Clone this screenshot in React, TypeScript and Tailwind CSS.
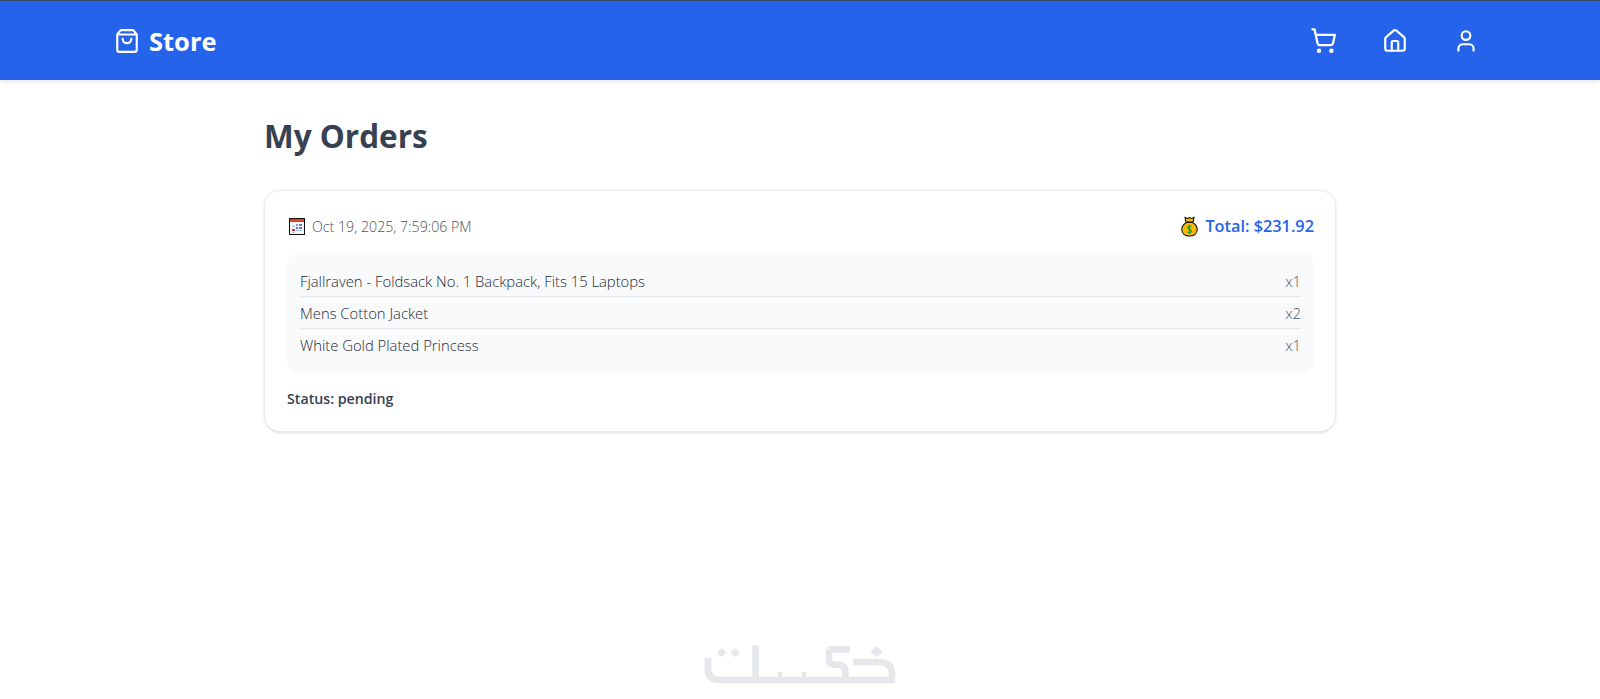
import { ShoppingBag, ShoppingCart, Home, User } from 'lucide-react'

const items = [
  { name: 'Fjallraven - Foldsack No. 1 Backpack, Fits 15 Laptops', qty: 1 },
  { name: 'Mens Cotton Jacket', qty: 2 },
  { name: 'White Gold Plated Princess', qty: 1 },
]

function CalendarEmoji() {
  return (
    <svg width="16" height="17" viewBox="0 0 16 17" shapeRendering="crispEdges" className="ml-[2px] shrink-0">
      <rect width="16" height="17" fill="#111" />
      <rect x="1" y="1" width="14" height="3" fill="#e8401c" />
      <rect x="1" y="4" width="14" height="12" fill="#f7f7f7" />
      <rect x="7" y="6" width="2" height="2" fill="#7f9bd0" />
      <rect x="10" y="6" width="3" height="2" fill="#5a7fc0" />
      <rect x="3" y="8" width="3" height="1" fill="#a9bde0" />
      <rect x="7" y="9" width="2" height="2" fill="#5a7fc0" />
      <rect x="10" y="9" width="3" height="2" fill="#5a7fc0" />
      <rect x="3" y="11" width="3" height="2" fill="#d8342a" />
      <rect x="7" y="12" width="6" height="1" fill="#a9bde0" />
      <rect x="3" y="14" width="2" height="1" fill="#a9bde0" />
    </svg>
  )
}

function MoneyBagEmoji() {
  return (
    <svg width="17" height="21" viewBox="0 0 17 21" className="shrink-0">
      <path d="M4 1.500 6.500 2.500 8.500 1.500 10.500 2.500 13 1.500 12 6H5Z" fill="#ffb900" stroke="#111" strokeWidth="1.100" />
      <path d="M5.500 6.500C2 8.500.8 11 .8 13.500.8 17.500 4 20 8.500 20S16.200 17.500 16.200 13.500C16.200 11 15 8.500 11.500 6.500Z" fill="#ffb900" stroke="#111" strokeWidth="1.100" />
      <path d="M10.500 10.500C9 9.500 6.800 10 6.800 11.700 6.800 13.800 10.500 13 10.500 15.200 10.500 16.800 8 17 6.500 16M8.500 8.800V18" fill="none" stroke="#12a03c" strokeWidth="1.200" />
    </svg>
  )
}

function KhamsatLogo() {
  return (
    <svg width="240" height="69" viewBox="0 0 720 207" fill="none" stroke="#e5e7eb" strokeWidth="20" className="absolute bottom-0 left-[680px]">
      <path d="M84 85V118Q84 150 120 150H500" />
      <path d="M227 46V150" />
      <path d="M300 150V126M372 150V126" strokeWidth="14" />
      <path d="M445 58H510M447 58V92Q447 104 470 104Q496 104 496 125V160" />
      <path d="M496 150H636V128Q636 96 590 96H520" />
      <path d="M125 54 139 68 125 82 111 68Z" fill="#e5e7eb" stroke="none" />
      <path d="M165 54 179 68 165 82 151 68Z" fill="#e5e7eb" stroke="none" />
      <path d="M590 48 608 65 590 82 572 65Z" fill="#e5e7eb" stroke="none" />
    </svg>
  )
}

export default function App() {
  return (
    <div className="relative min-h-[699px] overflow-hidden bg-white font-['Open_Sans',sans-serif] text-gray-700">
      <header className="flex h-[80px] items-center justify-between border-t border-[#3b4a6b] bg-[#2563eb] pl-[114px] pr-[121px] shadow-[0_2px_4px_rgba(0,0,0,0.1)]">
        <div className="flex items-center gap-[9px] text-white">
          <ShoppingBag size={26} strokeWidth={2} />
          <span className="text-[25.5px] leading-8 font-bold">Store</span>
        </div>
        <div className="flex items-center gap-[45px] text-white">
          <ShoppingCart size={27} strokeWidth={2} />
          <Home size={26} strokeWidth={2} />
          <User size={26} strokeWidth={2} />
        </div>
      </header>

      <main className="mx-auto w-[1072px] pt-[36px]">
        <h1 className="text-[31.5px] leading-[40px] font-bold text-[#374151]">My Orders</h1>

        <div className="mt-[34px] rounded-2xl border border-[#e9ebee] bg-white pt-[23px] pr-[21px] pb-[22px] pl-[22px] shadow-sm">
          <div className="flex items-center justify-between">
            <div className="flex items-center gap-[7px] text-[14.2px] font-light text-gray-600">
              <CalendarEmoji />
              <span>Oct 19, 2025, 7:59:06 PM</span>
            </div>
            <div className="flex items-center gap-[7px] text-[16.3px] font-semibold text-[#2563eb]">
              <MoneyBagEmoji />
              <span>Total: $231.92</span>
            </div>
          </div>

          <div className="mt-[15px] rounded-xl bg-gray-50 px-[13px] py-[12px]">
            {items.map((item, i) => (
              <div
                key={item.name}
                className={`flex h-[32px] items-center justify-between text-[14.8px] font-light ${i < items.length - 1 ? 'border-b border-gray-200' : ''}`}
              >
                <span className="text-gray-800">{item.name}</span>
                <span className="text-gray-600">x{item.qty}</span>
              </div>
            ))}
          </div>

          <p className="mt-[16px] text-[14.2px] leading-5 font-semibold text-gray-700">Status: pending</p>
        </div>
      </main>

      <KhamsatLogo />
    </div>
  )
}
